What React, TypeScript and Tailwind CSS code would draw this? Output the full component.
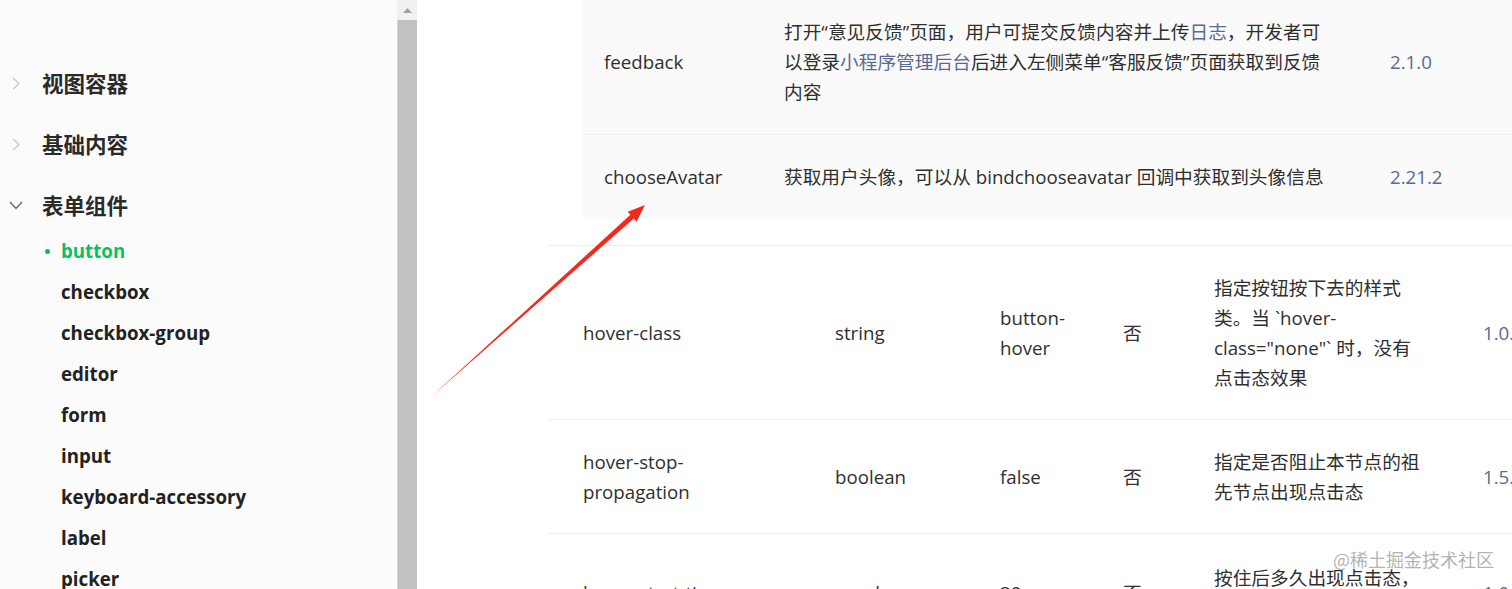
const font = "font-['Open_Sans','Noto_Sans_CJK_SC',sans-serif]";

const collapsed = ["视图容器", "基础内容"];
const items = [
  "checkbox",
  "checkbox-group",
  "editor",
  "form",
  "input",
  "keyboard-accessory",
  "label",
  "picker",
];

const rows = [
  {
    name: ["hover-class"],
    type: "string",
    def: ["button-", "hover"],
    req: "否",
    desc: ["指定按钮按下去的样式", "类。当 `hover-", 'class="none"` 时，没有', "点击态效果"],
    ver: "1.0.0",
    h: "h-[174px]",
  },
  {
    name: ["hover-stop-", "propagation"],
    type: "boolean",
    def: ["false"],
    req: "否",
    desc: ["指定是否阻止本节点的祖", "先节点出现点击态"],
    ver: "1.5.0",
    h: "h-[114px]",
  },
  {
    name: ["hover-start-time"],
    type: "number",
    def: ["20"],
    req: "否",
    desc: ["按住后多久出现点击态，", "单位毫秒"],
    ver: "1.0.0",
    h: "h-[118px]",
  },
];

function Lines({ lines }: { lines: string[] }) {
  return (
    <div>
      {lines.map((l) => (
        <div key={l} className="whitespace-nowrap">
          {l}
        </div>
      ))}
    </div>
  );
}

function Sidebar() {
  return (
    <div className="w-[397px] shrink-0 h-full bg-white flex">
      <div className="w-[32px] shrink-0" />
      <div className="flex-1 bg-[#fbfbfb] -ml-[32px] pt-[53px]">
        {collapsed.map((t) => (
          <div key={t} className="h-[61px] flex items-center">
            <div className="w-[42px] shrink-0 flex items-center pl-[12px]">
              <svg width="8" height="13" viewBox="0 0 8 13">
                <polyline points="1,1 7,6.5 1,12" fill="none" stroke="#c8c8c8" strokeWidth="1.4" />
              </svg>
            </div>
            <span className="text-[21.5px] font-bold text-[#2a2a2a] font-['Noto_Sans_CJK_SC',sans-serif]">
              {t}
            </span>
          </div>
        ))}
        <div className="h-[61px] flex items-center">
          <div className="w-[42px] shrink-0 flex items-center pl-[9px]">
            <svg width="14" height="9" viewBox="0 0 14 9">
              <polyline points="1,1 7,7.5 13,1" fill="none" stroke="#6b6b6b" strokeWidth="1.5" />
            </svg>
          </div>
          <span className="text-[21.5px] font-bold text-[#2a2a2a] font-['Noto_Sans_CJK_SC',sans-serif]">
            表单组件
          </span>
        </div>
        <div className={`-mt-[5px] ${font}`}>
          <div className="relative h-[41px] flex items-center pl-[61px] text-[18.7px] font-bold text-[#07c160]">
            <span className="absolute left-[45px] top-[18px] w-[5px] h-[5px] rounded-full bg-[#07c160]" />
            button
          </div>
          {items.map((t) => (
            <div key={t} className="h-[41px] flex items-center pl-[61px] text-[18.7px] font-bold text-[#222]">
              {t}
            </div>
          ))}
        </div>
      </div>
    </div>
  );
}

function Scrollbar() {
  return (
    <div className="w-[20px] shrink-0 h-full flex flex-col bg-[#f1f1f1]">
      <div className="h-[20px] flex items-center justify-center">
        <svg width="9" height="5" viewBox="0 0 9 5">
          <polygon points="4.5,0 9,5 0,5" fill="#a3a3a3" />
        </svg>
      </div>
      <div className="flex-1 bg-[#c1c1c1] border-l border-[#d4d4d4]" />
    </div>
  );
}

function InnerTable() {
  return (
    <div className="bg-[#fafafa] -mt-[10px] text-[#2f2f2f]">
      <div className="h-[145px] flex items-center border-b border-[#efefef]">
        <div className="w-[201px] shrink-0 pl-[21px]">feedback</div>
        <div className="w-[606px] shrink-0">
          <div className="whitespace-nowrap">
            打开“意见反馈”页面，用户可提交反馈内容并上传<span className="text-[#576b95]">日志</span>，开发者可
          </div>
          <div className="whitespace-nowrap">
            以登录<span className="text-[#576b95]">小程序管理后台</span>后进入左侧菜单“客服反馈”页面获取到反馈
          </div>
          <div>内容</div>
        </div>
        <div className="text-[#576b95]">2.1.0</div>
      </div>
      <div className="h-[84px] flex items-center">
        <div className="w-[201px] shrink-0 pl-[21px]">chooseAvatar</div>
        <div className="w-[606px] shrink-0 whitespace-nowrap">
          获取用户头像，可以从 bindchooseavatar 回调中获取到头像信息
        </div>
        <div className="text-[#576b95]">2.21.2</div>
      </div>
    </div>
  );
}

function Content() {
  return (
    <div className={`flex-1 h-full bg-white pl-[131px] text-[18.7px] leading-[30px] ${font}`}>
      <div className="pl-[35px] pb-[26px] border-b border-[#eeeeee]">
        <InnerTable />
      </div>
      {rows.map((r) => (
        <div key={r.type} className={`${r.h} flex items-center border-b border-[#eeeeee] text-[#2f2f2f]`}>
          <div className="w-[287px] shrink-0 pl-[35px]">
            <Lines lines={r.name} />
          </div>
          <div className="w-[165px] shrink-0">{r.type}</div>
          <div className="w-[123px] shrink-0">
            <Lines lines={r.def} />
          </div>
          <div className="w-[91px] shrink-0">{r.req}</div>
          <div className="w-[269px] shrink-0">
            <Lines lines={r.desc} />
          </div>
          <div className="text-[#576b95] whitespace-nowrap">{r.ver}</div>
        </div>
      ))}
    </div>
  );
}

export default function App() {
  return (
    <div className="relative w-[1512px] h-[589px] overflow-hidden flex bg-white">
      <Sidebar />
      <Scrollbar />
      <Content />
      <svg className="absolute left-0 top-0 pointer-events-none" width="1512" height="589" viewBox="0 0 1512 589">
        <polygon
          points="431,397 630.4,214.8 627.7,211.7 645,205 636.5,221.7 633.8,218.6"
          fill="#f22a1e"
        />
      </svg>
      <div className="absolute left-[1333px] top-[546px] text-[18px] text-[#a9a9a9]/90 font-['Noto_Sans_CJK_SC',sans-serif] whitespace-nowrap">
        @稀土掘金技术社区
      </div>
    </div>
  );
}
